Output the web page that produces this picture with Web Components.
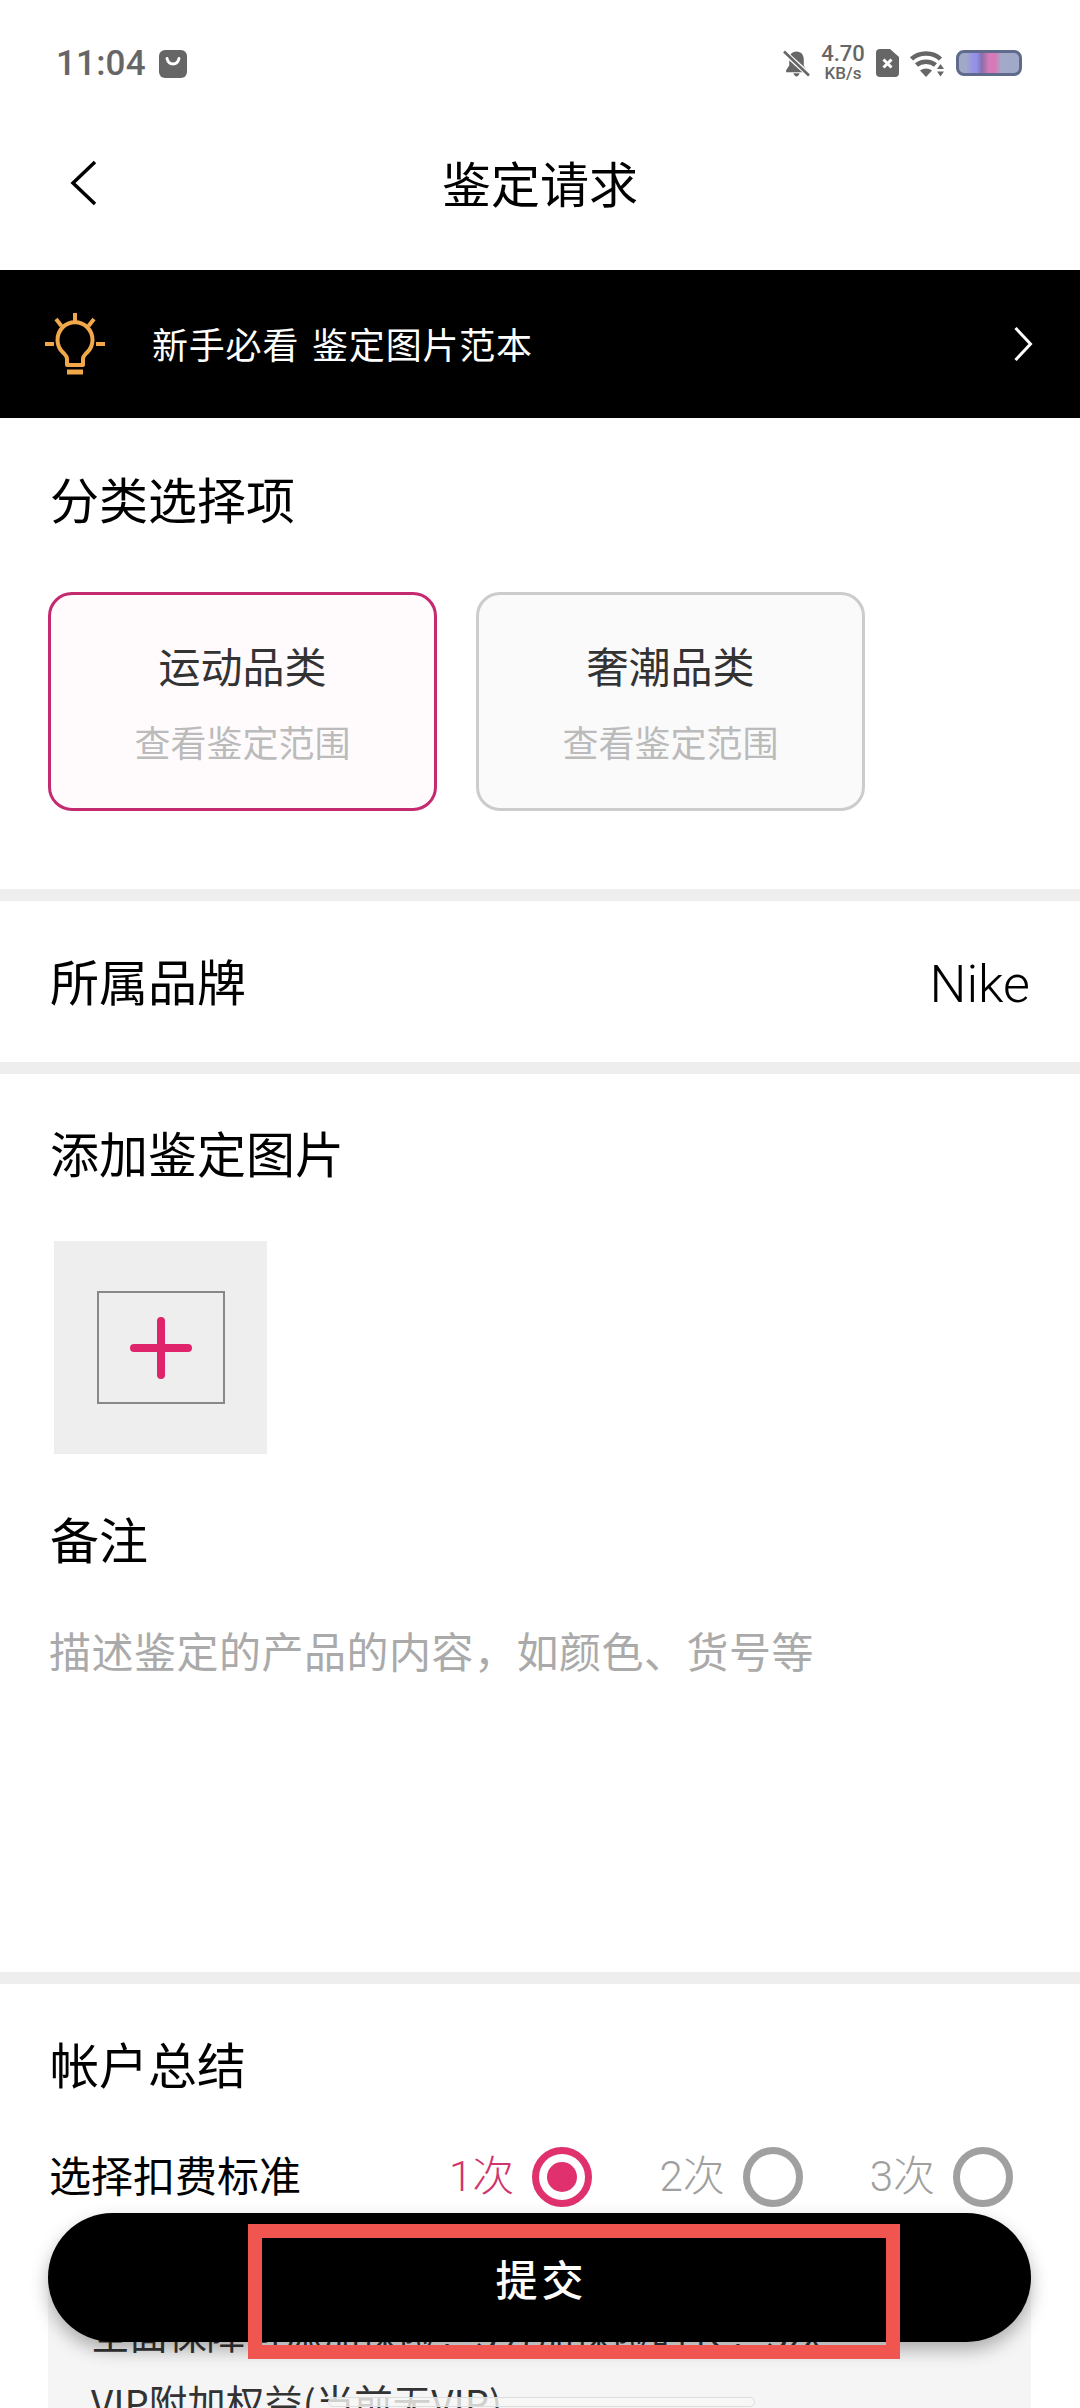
<!DOCTYPE html>
<html lang="zh">
<head>
<meta charset="utf-8">
<title>鉴定请求</title>
<style>
    html, body { margin: 0; padding: 0; background: #fff; }
    body { font-family: "Noto Sans CJK SC", "Noto Sans", sans-serif; color: #000; }
</style>
</head>
<body>
<app-screen>
    <status-bar></status-bar>
    <nav-bar>鉴定请求</nav-bar>
    <guide-banner>新手必看 鉴定图片范本</guide-banner>

    <form-section top="50" bottom="78">
        <section-title>分类选择项</section-title>
        <card-row>
            <category-card active>运动品类</category-card>
            <category-card>奢潮品类</category-card>
        </card-row>
    </form-section>
    <section-divider></section-divider>

    <brand-row>所属品牌<span slot="value">Nike</span></brand-row>
    <section-divider></section-divider>

    <form-section top="48" bottom="0">
        <section-title>添加鉴定图片</section-title>
        <upload-tile></upload-tile>
        <section-title style="margin-top:54px">备注</section-title>
        <note-field>描述鉴定的产品的内容，如颜色、货号等</note-field>
    </form-section>
    <section-divider></section-divider>

    <form-section top="49" bottom="0">
        <section-title>帐户总结</section-title>
        <fee-row>
            选择扣费标准
            <fee-option slot="options" checked>1次</fee-option>
            <fee-option slot="options">2次</fee-option>
            <fee-option slot="options">3次</fee-option>
        </fee-row>
        <summary-panel>
            <summary-line>全面保障可添加保险：3分加保险时长：3次</summary-line>
            <summary-line track>VIP附加权益(当前无VIP)</summary-line>
        </summary-panel>
    </form-section>

    <submit-button>提交</submit-button>
    <annotation-box></annotation-box>
</app-screen>

<script>
class AppScreen extends HTMLElement {
    constructor() {
        super();
        this.attachShadow({ mode: 'open' });
        this.shadowRoot.innerHTML = `
            <style>
                :host {
                    display: block;
                    position: relative;
                    width: 1080px;
                    height: 2408px;
                    overflow: hidden;
                    background: #fff;
                }
            </style>
            <slot></slot>
        `;
    }
}

class StatusBar extends HTMLElement {
    constructor() {
        super();
        this.attachShadow({ mode: 'open' });
        this.shadowRoot.innerHTML = `
            <style>
                :host {
                    display: flex;
                    align-items: center;
                    box-sizing: border-box;
                    height: 100px;
                    padding: 28px 58px 0 56px;
                    color: #666;
                    font-family: Roboto, sans-serif;
                }
                .time { font-size: 35px; font-weight: 500; line-height: 40px; letter-spacing: .2px; }
                .left { display: flex; align-items: center; gap: 13px; }
                .right { display: flex; align-items: center; gap: 11px; margin-left: auto; margin-top: -2px; }
                .speed { width: 44px; text-align: center; font-weight: 500; }
                .speed div:first-child { font-size: 22px; line-height: 21px; }
                .speed div:last-child { font-size: 17px; line-height: 19px; }
                .battery {
                    box-sizing: border-box;
                    width: 66px;
                    height: 26px;
                    border: 3px solid #5f6a8c;
                    border-radius: 8px;
                    background: linear-gradient(90deg, #a0a9c8 0 12%, #9a93e6 22%, #8f8fe8 30%, #8a6fa8 38%, #d77ab8 50%, #d878b4 60%, #a4a9c8 70%, #a0a9c8 100%);
                }
                svg { display: block; }
            </style>
            <div class="left">
                <span class="time">11:04</span>
                <svg width="28" height="28" viewBox="0 0 28 28">
                    <rect width="28" height="28" rx="6" fill="#666"/>
                    <path d="M8 8.500c1 4 3.400 5.500 6 5.500s5-1.500 6-5.500" fill="none" stroke="#fff" stroke-width="3" stroke-linecap="round"/>
                </svg>
            </div>
            <div class="right">
                <svg width="27" height="27" viewBox="0 0 26 26">
                    <path d="M13 1.500c-4.500 0-7 3.500-7 7.500v6l-3 4.500v2h20v-2l-3-4.500V9c0-4-2.500-7.500-7-7.500z" fill="#666"/>
                    <path d="M10 22.500c.6 2 1.700 3 3 3s2.400-1 3-3z" fill="#666"/>
                    <path d="M1 2l24 22" stroke="#fff" stroke-width="5"/>
                    <path d="M1 1.500l24 23" stroke="#666" stroke-width="2.500"/>
                </svg>
                <div class="speed"><div>4.70</div><div>KB/s</div></div>
                <svg width="23" height="28" viewBox="0 0 23 28">
                    <path d="M4 0h10l9 8v16a4 4 0 0 1-4 4H4a4 4 0 0 1-4-4V4a4 4 0 0 1 4-4z" fill="#666"/>
                    <path d="M7.500 10.500l8 8M15.500 10.500l-8 8" stroke="#fff" stroke-width="3"/>
                </svg>
                <svg width="35" height="27" viewBox="0 0 35 27">
                    <path d="M1.500 9C9 1.500 23 1.500 30.500 9" fill="none" stroke="#666" stroke-width="4.500"/>
                    <path d="M6.500 15c5-4.500 14-4.500 19 0" fill="none" stroke="#666" stroke-width="4.500"/>
                    <path d="M10 20.500c3.500-2.800 8.500-2.800 12 0L16 27z" fill="#666"/>
                    <path d="M30.500 14l3.500 5h-7zM30.500 26.500l-3.500-5h7z" fill="#666"/>
                </svg>
                <div class="battery"></div>
            </div>
        `;
    }
}

class NavBar extends HTMLElement {
    constructor() {
        super();
        this.attachShadow({ mode: 'open' });
        this.shadowRoot.innerHTML = `
            <style>
                :host {
                    display: flex;
                    align-items: center;
                    justify-content: center;
                    position: relative;
                    box-sizing: border-box;
                    height: 170px;
                    padding-bottom: 6px;
                    font-size: 49px;
                    line-height: 60px;
                    color: #000;
                }
                svg { position: absolute; left: 70px; top: 60px; }
            </style>
            <svg width="27" height="46" viewBox="0 0 27 46">
                <path d="M25 2L3 23l22 21" fill="none" stroke="#000" stroke-width="3.500"/>
            </svg>
            <slot></slot>
        `;
    }
}

class GuideBanner extends HTMLElement {
    constructor() {
        super();
        this.attachShadow({ mode: 'open' });
        this.shadowRoot.innerHTML = `
            <style>
                :host {
                    display: flex;
                    align-items: center;
                    box-sizing: border-box;
                    height: 148px;
                    padding: 0 47px 0 44px;
                    background: #000;
                    color: #fff;
                    font-size: 36px;
                    letter-spacing: .8px;
                    word-spacing: 4px;
                }
                .text { margin: 0 0 3px 46px; }
                .chevron { margin-left: auto; }
                svg { display: block; }
            </style>
            <svg width="62" height="64" viewBox="0 0 62 64">
                <g fill="none" stroke="#f0a84a" stroke-width="4">
                    <path d="M31 1v9M12 7l5.500 7M50 7l-5.500 7M1 32h9M52 32h9"/>
                    <path d="M23 53v-6c0-3-1.500-4-4-6.500a17.500 17.500 0 1 1 24 0c-2.500 2.500-4 3.500-4 6.500v6z" stroke-linejoin="round"/>
                    <path d="M23 60h16" stroke-width="5"/>
                </g>
            </svg>
            <span class="text"><slot></slot></span>
            <svg class="chevron" width="19" height="34" viewBox="0 0 19 34">
                <path d="M1.500 1l15 16-15 16" fill="none" stroke="#fff" stroke-width="3"/>
            </svg>
        `;
    }
}

class FormSection extends HTMLElement {
    constructor() {
        super();
        this.attachShadow({ mode: 'open' });
        const top = this.getAttribute('top') || 0;
        const bottom = this.getAttribute('bottom') || 0;
        this.shadowRoot.innerHTML = `
            <style>
                :host {
                    display: block;
                    padding: ${top}px 50px ${bottom}px 50px;
                }
            </style>
            <slot></slot>
        `;
    }
}

class SectionTitle extends HTMLElement {
    constructor() {
        super();
        this.attachShadow({ mode: 'open' });
        this.shadowRoot.innerHTML = `
            <style>
                :host {
                    display: block;
                    font-size: 49px;
                    line-height: 60px;
                    color: #000;
                }
            </style>
            <slot></slot>
        `;
    }
}

class SectionDivider extends HTMLElement {
    constructor() {
        super();
        this.attachShadow({ mode: 'open' });
        this.shadowRoot.innerHTML = `
            <style>
                :host { display: block; height: 12px; background: #eee; }
            </style>
        `;
    }
}

class CardRow extends HTMLElement {
    constructor() {
        super();
        this.attachShadow({ mode: 'open' });
        this.shadowRoot.innerHTML = `
            <style>
                :host { display: flex; gap: 39px; margin: 64px 0 0 -2px; }
            </style>
            <slot></slot>
        `;
    }
}

class CategoryCard extends HTMLElement {
    constructor() {
        super();
        this.attachShadow({ mode: 'open' });
        this.shadowRoot.innerHTML = `
            <style>
                :host {
                    display: flex;
                    flex-direction: column;
                    align-items: center;
                    box-sizing: border-box;
                    width: 389px;
                    height: 219px;
                    padding-top: 42px;
                    border: 3px solid #ccc;
                    border-radius: 24px;
                    background: #fafafa;
                }
                :host([active]) { border-color: #c42a70; background: #fffbfd; }
                .name { font-size: 42px; line-height: 56px; color: #333; }
                .hint { font-size: 36px; line-height: 50px; margin-top: 23px; color: #bbb; }
            </style>
            <div class="name"><slot></slot></div>
            <div class="hint">查看鉴定范围</div>
        `;
    }
}

class BrandRow extends HTMLElement {
    constructor() {
        super();
        this.attachShadow({ mode: 'open' });
        this.shadowRoot.innerHTML = `
            <style>
                :host {
                    display: flex;
                    align-items: center;
                    justify-content: space-between;
                    box-sizing: border-box;
                    height: 161px;
                    padding: 0 50px 4px 50px;
                    font-size: 49px;
                    line-height: 60px;
                }
                .value { margin-top: 10px; font-family: Roboto, sans-serif; font-size: 52px; font-weight: 300; }
            </style>
            <span><slot></slot></span>
            <span class="value"><slot name="value"></slot></span>
        `;
    }
}

class UploadTile extends HTMLElement {
    constructor() {
        super();
        this.attachShadow({ mode: 'open' });
        this.shadowRoot.innerHTML = `
            <style>
                :host {
                    display: flex;
                    align-items: center;
                    justify-content: center;
                    width: 213px;
                    height: 213px;
                    margin: 59px 0 0 4px;
                    background: #eee;
                }
                .frame {
                    display: flex;
                    align-items: center;
                    justify-content: center;
                    box-sizing: border-box;
                    width: 128px;
                    height: 113px;
                    border: 2px solid #888;
                }
                svg { display: block; }
            </style>
            <div class="frame">
                <svg width="62" height="62" viewBox="0 0 62 62">
                    <path d="M31 4v54M4 31h54" stroke="#e0246c" stroke-width="8" stroke-linecap="round"/>
                </svg>
            </div>
        `;
    }
}

class NoteField extends HTMLElement {
    constructor() {
        super();
        this.attachShadow({ mode: 'open' });
        this.shadowRoot.innerHTML = `
            <style>
                :host {
                    display: block;
                    box-sizing: border-box;
                    height: 404px;
                    margin-left: -1px;
                    padding-top: 52px;
                    font-size: 42px;
                    letter-spacing: .5px;
                    line-height: 60px;
                    color: #aaa;
                }
            </style>
            <slot></slot>
        `;
    }
}

class FeeRow extends HTMLElement {
    constructor() {
        super();
        this.attachShadow({ mode: 'open' });
        this.shadowRoot.innerHTML = `
            <style>
                :host {
                    display: flex;
                    align-items: center;
                    justify-content: space-between;
                    height: 60px;
                    margin: 54px 17px 0 -1px;
                    font-size: 42px;
                    line-height: 60px;
                    color: #000;
                }
                .label { margin-bottom: 6px; }
                .options { display: flex; gap: 67px; }
            </style>
            <span class="label"><slot></slot></span>
            <div class="options"><slot name="options"></slot></div>
        `;
    }
}

class FeeOption extends HTMLElement {
    constructor() {
        super();
        this.attachShadow({ mode: 'open' });
        this.shadowRoot.innerHTML = `
            <style>
                :host {
                    display: flex;
                    align-items: center;
                    gap: 18px;
                    font-family: Roboto, "Noto Sans CJK SC", sans-serif;
                    font-size: 42px;
                    font-weight: 300;
                    color: #a0a0a0;
                    --ring: #a0a0a0;
                }
                :host([checked]) { color: #d0356d; --ring: #e0306e; }
                .ring {
                    display: flex;
                    align-items: center;
                    justify-content: center;
                    box-sizing: border-box;
                    width: 60px;
                    height: 60px;
                    border: 7px solid var(--ring);
                    border-radius: 50%;
                }
                :host([checked]) .ring::after {
                    content: "";
                    width: 30px;
                    height: 30px;
                    border-radius: 50%;
                    background: var(--ring);
                }
            </style>
            <span><slot></slot></span>
            <span class="ring"></span>
        `;
    }
}

class SummaryPanel extends HTMLElement {
    constructor() {
        super();
        this.attachShadow({ mode: 'open' });
        this.shadowRoot.innerHTML = `
            <style>
                :host {
                    display: block;
                    box-sizing: border-box;
                    width: 983px;
                    height: 300px;
                    margin: 63px 0 0 -2px;
                    padding: 28px 43px 0 43px;
                    background: #f5f5f6;
                }
            </style>
            <slot></slot>
        `;
    }
}

class SummaryLine extends HTMLElement {
    constructor() {
        super();
        this.attachShadow({ mode: 'open' });
        this.shadowRoot.innerHTML = `
            <style>
                :host {
                    display: block;
                    position: relative;
                    height: 69px;
                    font-size: 38.5px;
                    line-height: 69px;
                    white-space: nowrap;
                    color: #333;
                }
                .track {
                    position: absolute;
                    left: 237px;
                    top: 30px;
                    width: 425px;
                    height: 8px;
                    border: 1px solid #ddd;
                    border-radius: 5px;
                    background: rgba(248, 247, 246, .8);
                }
                :host(:not([track])) .track { display: none; }
            </style>
            <slot></slot>
            <div class="track"></div>
        `;
    }
}

class SubmitButton extends HTMLElement {
    constructor() {
        super();
        this.attachShadow({ mode: 'open' });
        this.shadowRoot.innerHTML = `
            <style>
                :host {
                    display: flex;
                    align-items: center;
                    justify-content: center;
                    position: absolute;
                    box-sizing: border-box;
                    left: 48px;
                    top: 2213px;
                    width: 983px;
                    height: 129px;
                    padding-left: 4px;
                    border-radius: 65px;
                    background: #000;
                    box-shadow: 0 8px 18px rgba(0, 0, 0, .3);
                    color: #fff;
                    font-size: 42px;
                    font-weight: 500;
                    letter-spacing: 4px;
                }
            </style>
            <slot></slot>
        `;
    }
}

class AnnotationBox extends HTMLElement {
    constructor() {
        super();
        this.attachShadow({ mode: 'open' });
        this.shadowRoot.innerHTML = `
            <style>
                :host {
                    display: block;
                    position: absolute;
                    box-sizing: border-box;
                    left: 248px;
                    top: 2224px;
                    width: 652px;
                    height: 135px;
                    border: 14px solid #f0564f;
                }
            </style>
        `;
    }
}

customElements.define('app-screen', AppScreen);
customElements.define('status-bar', StatusBar);
customElements.define('nav-bar', NavBar);
customElements.define('guide-banner', GuideBanner);
customElements.define('form-section', FormSection);
customElements.define('section-title', SectionTitle);
customElements.define('section-divider', SectionDivider);
customElements.define('card-row', CardRow);
customElements.define('category-card', CategoryCard);
customElements.define('brand-row', BrandRow);
customElements.define('upload-tile', UploadTile);
customElements.define('note-field', NoteField);
customElements.define('fee-row', FeeRow);
customElements.define('fee-option', FeeOption);
customElements.define('summary-panel', SummaryPanel);
customElements.define('summary-line', SummaryLine);
customElements.define('submit-button', SubmitButton);
customElements.define('annotation-box', AnnotationBox);
</script>
</body>
</html>
